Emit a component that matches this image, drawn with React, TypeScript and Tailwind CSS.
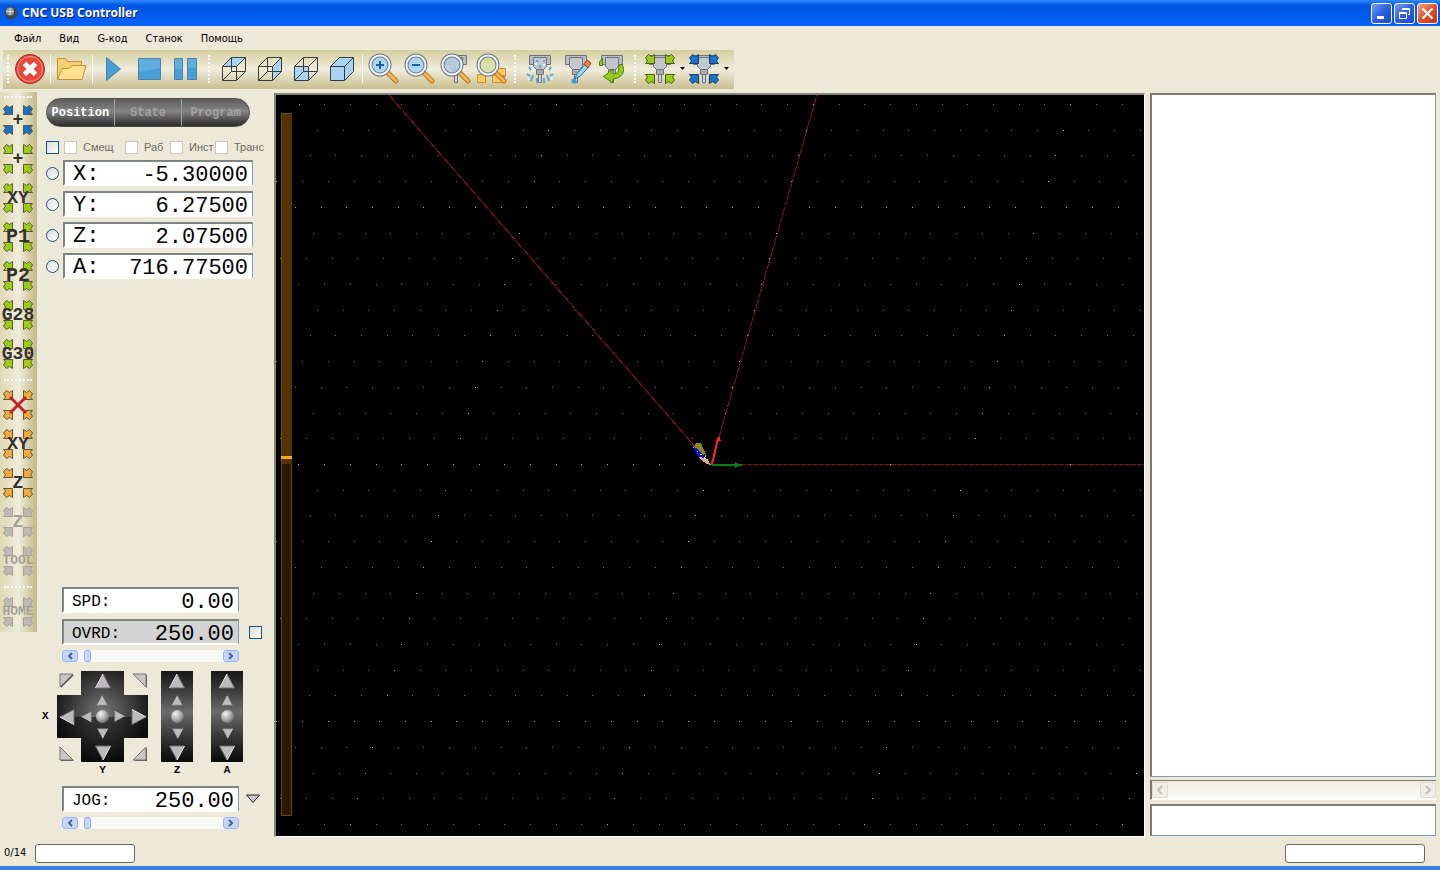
import { useState, type ReactNode } from 'react';

const GREEN = '#9ccc13';
const BLUE = '#1673c9';
const ORANGE = '#f7a83c';
const GRAY = '#bcbab2';

type CubeFace = 'top' | 'right' | 'front' | 'all';

interface SideTool {
    name: string;
    color: string;
    text?: string;
    textClass?: string;
    cross?: boolean;
    disabled?: boolean;
}

const zeroTools: SideTool[] = [
    { name: 'Go to offset', color: BLUE, text: '+', textClass: 'text-lg' },
    { name: 'Go to position', color: GREEN, text: '+', textClass: 'text-lg' },
    { name: 'Go to XY', color: GREEN, text: 'XY', textClass: 'text-lg' },
    { name: 'Go to P1', color: GREEN, text: 'P1', textClass: 'text-xl' },
    { name: 'Go to P2', color: GREEN, text: 'P2', textClass: 'text-xl' },
    { name: 'Go to G28', color: GREEN, text: 'G28', textClass: 'text-lg' },
    { name: 'Go to G30', color: GREEN, text: 'G30', textClass: 'text-lg' },
];

const measureTools: SideTool[] = [
    { name: 'Clear offset', color: ORANGE, cross: true },
    { name: 'Set XY', color: ORANGE, text: 'XY', textClass: 'text-lg' },
    { name: 'Set Z', color: ORANGE, text: 'Z', textClass: 'text-lg' },
    { name: 'Measure Z', color: GRAY, text: 'Z', textClass: 'text-lg', disabled: true },
    { name: 'Measure tool', color: GRAY, text: 'TOOL', textClass: 'text-[13px]', disabled: true },
];

const homeTools: SideTool[] = [
    { name: 'Home', color: GRAY, text: 'HOME', textClass: 'text-[13px]', disabled: true },
];

const axes = [
    { name: 'X', value: '-5.30000' },
    { name: 'Y', value: '6.27500' },
    { name: 'Z', value: '2.07500' },
    { name: 'A', value: '716.77500' },
];

function CornerArrows({ color, stroke = '#4a5a1c' }: { color: string; stroke?: string }) {
    const points = '9.5,9.5 0.5,9.5 2.5,7 0.5,4 3.5,0.5 6.5,2.5 9.5,0.5';
    return (
        <g fill={color} stroke={stroke} strokeWidth="1" strokeLinejoin="round">
            <polygon points={points} transform="translate(1 1)" />
            <polygon points={points} transform="translate(31 1) scale(-1 1)" />
            <polygon points={points} transform="translate(1 31) scale(1 -1)" />
            <polygon points={points} transform="translate(31 31) scale(-1 -1)" />
        </g>
    );
}

function Spindle() {
    return (
        <g stroke="#70747c" strokeWidth="1">
            <path d="M5.500 2.500h21v9h-4v-3h-13v3h-4z" fill="#b9bcc2" />
            <path d="M9.500 4.500h13v9l-3 3h-7l-3-3z" fill="#c3c6cc" />
            <path d="M12.500 16.500h7v5h-7z" fill="#a7abb3" />
            <path d="M14.500 21.500h3v8h-3z" fill="#cfd2d7" />
        </g>
    );
}

function Svg32({ children }: { children: ReactNode }) {
    return (
        <svg width="32" height="32" viewBox="0 0 32 32" fill="none" aria-hidden="true">
            {children}
        </svg>
    );
}

function CubeIcon({ face }: { face: CubeFace }) {
    const all = face === 'all';
    return (
        <Svg32>
            <g fill="#a9d2f7">
                {(all || face === 'top') && <path d="M4.500 13.500L13.500 4.500H27.500L18.500 13.500z" />}
                {(all || face === 'right') && <path d="M18.500 13.500L27.500 4.500V18.500L18.500 27.500z" />}
                {(all || face === 'front') && <path d="M4.500 13.500H18.500V27.500H4.500z" />}
            </g>
            <g stroke="#3c3c34">
                <path d="M4.500 13.500H18.500V27.500H4.500zM4.500 13.500L13.500 4.500H27.500V18.500L18.500 27.500M18.500 13.500L27.500 4.500" />
                {!all && <path d="M13.500 4.500V18.500H27.500M13.500 18.500L4.500 27.500" />}
            </g>
        </Svg32>
    );
}

function Magnifier({ sign, lens = '#9fd4f6' }: { sign?: string; lens?: string }) {
    return (
        <g>
            <path d="M20 20l8 8" stroke="#b87920" strokeWidth="5" strokeLinecap="round" />
            <path d="M20 20l8 8" stroke="#f9b552" strokeWidth="3" strokeLinecap="round" />
            <circle cx="12" cy="12" r="9.500" fill={lens} fillOpacity="0.85" stroke="#6f7a86" strokeWidth="4" />
            <circle cx="12" cy="12" r="9.500" stroke="#f2f5f8" strokeWidth="2" />
            {sign && <path d={sign} stroke="#155fa8" strokeWidth="2" />}
        </g>
    );
}

function ToolButton({ name, children }: { name: string; children: ReactNode }) {
    return (
        <button type="button" aria-label={name} className="flex h-9 w-9 shrink-0 items-center justify-center">
            {children}
        </button>
    );
}

function Separator() {
    return <div className="mx-0.5 h-7 w-0.5 shrink-0 border-l border-white" />;
}

function Grip({ first }: { first?: boolean }) {
    return <div className={`ml-1 h-7 shrink-0 border-l-2 border-dotted border-white ${first ? 'mr-[3px]' : 'mr-1.5'}`} />;
}

function DropArrow({ name }: { name: string }) {
    return (
        <button type="button" aria-label={name} className="flex h-9 w-2 shrink-0 items-center justify-center">
            <svg width="5" height="3" viewBox="0 0 5 3" aria-hidden="true">
                <path d="M0 0h5L2.500 3z" fill="#000" />
            </svg>
        </button>
    );
}

function TitleBar() {
    const button = 'flex h-[21px] w-[21px] items-center justify-center rounded-[3px] border border-white';
    return (
        <header className="flex h-[26px] shrink-0 items-center gap-1 bg-linear-to-b from-[#2f8bff] via-[#0054e3] via-20% to-[#0363fb] pr-0.5 pl-1">
            <svg width="14" height="14" viewBox="0 0 14 14" aria-hidden="true">
                <circle cx="7" cy="7" r="6.500" fill="#3c4a44" />
                <circle cx="6" cy="5.500" r="4" fill="#8b9a92" />
                <path d="M6 2v7M2.500 5.500h7" stroke="#dfe5e0" />
            </svg>
            <h1 className="flex-1 font-['Noto_Sans'] text-[12px] font-bold text-white [text-shadow:1px_1px_0_#0a1883]">
                CNC USB Controller
            </h1>
            <div className="flex gap-0.5">
                <button type="button" aria-label="Minimize" className={`${button} bg-linear-to-br from-[#7b9cf0] via-[#2f5fe0] to-[#1a49cf]`}>
                    <svg width="13" height="13" viewBox="0 0 13 13"><path d="M2 9h7v3H2z" fill="#fff" /></svg>
                </button>
                <button type="button" aria-label="Restore" className={`${button} bg-linear-to-br from-[#7b9cf0] via-[#2f5fe0] to-[#1a49cf]`}>
                    <svg width="13" height="13" viewBox="0 0 13 13" fill="none" stroke="#fff">
                        <path d="M1.500 5.500h7v6h-7zM1.500 6.500h7M4.500 3V1.500h7v6H10M4.500 2.500h7" />
                    </svg>
                </button>
                <button type="button" aria-label="Close" className={`${button} bg-linear-to-br from-[#f0a086] via-[#e0512c] to-[#c23312]`}>
                    <svg width="13" height="13" viewBox="0 0 13 13"><path d="M1.500 1.500l10 10M11.500 1.500l-10 10" stroke="#fff" strokeWidth="2" /></svg>
                </button>
            </div>
        </header>
    );
}

function Toolbar() {
    return (
        <div role="toolbar" className="ml-[3px] flex h-[39px] w-fit shrink-0 items-center bg-linear-to-b from-[#d6ce9f] via-[#efecdc] to-[#c9be8d] pr-1 pb-0.5">
            <Grip first />
            <ToolButton name="Emergency stop">
                <Svg32>
                    <circle cx="16" cy="16" r="14.500" fill="#e8473b" stroke="#a3231c" />
                    <circle cx="16" cy="16" r="12.500" stroke="#f59a90" />
                    <path d="M10.500 10.500l11 11M21.500 10.500l-11 11" stroke="#fff" strokeWidth="5" />
                </Svg32>
            </ToolButton>
            <Separator />
            <ToolButton name="Open">
                <Svg32>
                    <path d="M1.500 26V5.500h8l2 3h14V13" fill="#f5cf72" stroke="#c2913a" />
                    <path d="M1.500 26.500L6 15.500h7l3-3h14L26 26.500z" fill="#ffe08e" stroke="#c2913a" />
                </Svg32>
            </ToolButton>
            <Separator />
            <ToolButton name="Start">
                <Svg32><path d="M8.500 4.500L22.500 16 8.500 27.500z" fill="#479fd9" stroke="#557f9f" /></Svg32>
            </ToolButton>
            <ToolButton name="Stop">
                <Svg32>
                    <path d="M4.500 5.500h22v21h-22z" fill="#479fd9" stroke="#557f9f" />
                    <path d="M5 6h21v9L5 19z" fill="#75bbe8" fillOpacity="0.500" />
                </Svg32>
            </ToolButton>
            <ToolButton name="Pause">
                <Svg32>
                    <path d="M4.500 5.500h8v21h-8zM17.500 5.500h9v21h-9z" fill="#479fd9" stroke="#557f9f" />
                    <path d="M5 6h7v10H5zM18 6h8v9h-8z" fill="#75bbe8" fillOpacity="0.500" />
                </Svg32>
            </ToolButton>
            <Grip />
            <ToolButton name="Top view"><CubeIcon face="top" /></ToolButton>
            <ToolButton name="Side view"><CubeIcon face="right" /></ToolButton>
            <ToolButton name="Front view"><CubeIcon face="front" /></ToolButton>
            <ToolButton name="Isometric view"><CubeIcon face="all" /></ToolButton>
            <Separator />
            <ToolButton name="Zoom in"><Svg32><Magnifier sign="M12 8v8M8 12h8" /></Svg32></ToolButton>
            <ToolButton name="Zoom out"><Svg32><Magnifier sign="M8 12h8" /></Svg32></ToolButton>
            <ToolButton name="Zoom to tool"><Svg32><Spindle /><Magnifier lens="#b4cde0" /></Svg32></ToolButton>
            <ToolButton name="Zoom to fit">
                <Svg32>
                    <path d="M1.500 21.500h8v8h-8zM8.500 1.500h8v6h-8zM21.500 15.500h8v8h-8zM16.500 22.500h12v7h-12z" fill="#ffc95c" stroke="#c8923a" />
                    <Magnifier lens="#d5dfa0" />
                </Svg32>
            </ToolButton>
            <Grip />
            <ToolButton name="Coolant">
                <Svg32>
                    <Spindle />
                    <path d="M5 14l2 3M27 14l-2 3M3 21l3 2M29 21l-3 2M9 22l-2 6M23 22l2 6M13 25v5M20 25v5M12 8h2M19 8h2M16 12v3" stroke="#5ba9d6" strokeWidth="2" />
                    <path d="M8 16h2M22 16h2M4 26h2M27 26h2M11 11h2M19 12h2" stroke="#e6f4fc" strokeWidth="2" />
                </Svg32>
            </ToolButton>
            <ToolButton name="Measure">
                <Svg32>
                    <Spindle />
                    <path d="M14.500 26l3-6 8-9 3 3-8 9z" fill="#9bd6f7" stroke="#2a6da6" />
                    <path d="M24 11l3-4 4 3-3 5z" fill="#f0813a" stroke="#94461b" />
                    <circle cx="14" cy="28" r="2.500" fill="#2f9be3" />
                </Svg32>
            </ToolButton>
            <ToolButton name="Tool change">
                <Svg32>
                    <Spindle />
                    <path d="M26 11c4 8 0 14-9 15v4L7.500 23.500 17 16v5c5 0 7-4 5-8z" fill="#96cb1c" stroke="#527a10" />
                    <path d="M3.500 12.500V9l3-4v7.500z" fill="#96cb1c" stroke="#527a10" />
                </Svg32>
            </ToolButton>
            <Grip />
            <ToolButton name="Go to"><Svg32><Spindle /><CornerArrows color={GREEN} /></Svg32></ToolButton>
            <DropArrow name="Go to options" />
            <ToolButton name="Set offset"><Svg32><Spindle /><CornerArrows color={BLUE} stroke="#1b3f66" /></Svg32></ToolButton>
            <DropArrow name="Set offset options" />
        </div>
    );
}

function SideButton({ tool }: { tool: SideTool }) {
    return (
        <button type="button" aria-label={tool.name} disabled={tool.disabled} className="grid h-[39px] w-9 place-items-center">
            <span className="[grid-area:1/1]">
                <Svg32>
                    <CornerArrows color={tool.color} stroke={tool.disabled ? '#a3a198' : '#5a5a35'} />
                    {tool.cross && <path d="M8 8l16 16M24 8L8 24" stroke="#c5222b" strokeWidth="3" />}
                </Svg32>
            </span>
            {tool.text && (
                <span className={`[grid-area:1/1] font-['Liberation_Mono'] leading-none font-bold ${tool.textClass} ${tool.disabled ? 'text-[#a3a198]' : 'text-[#33332e]'}`}>
                    {tool.text}
                </span>
            )}
        </button>
    );
}

function SideGrip() {
    return <div className="mb-1 ml-1 h-2 w-7 border-b-2 border-dotted border-white" />;
}

function SideToolbar() {
    return (
        <div role="toolbar" className="flex h-[540px] w-[37px] shrink-0 flex-col items-start bg-linear-to-r from-[#e0d9b4] via-[#efecdc] to-[#c3b783]">
            <div className="mb-0.5 ml-1 h-1.5 w-7 border-b-2 border-dotted border-white" />
            {zeroTools.map((tool) => <SideButton key={tool.name} tool={tool} />)}
            <SideGrip />
            {measureTools.map((tool) => <SideButton key={tool.name} tool={tool} />)}
            <SideGrip />
            {homeTools.map((tool) => <SideButton key={tool.name} tool={tool} />)}
        </div>
    );
}

function TabBar() {
    const [active, setActive] = useState('Position');
    return (
        <div role="tablist" className="flex h-[29px] w-[204px] overflow-hidden rounded-full border border-[#4a4a4a] bg-linear-to-b from-[#5c5c5c] via-[#858585] via-45% to-[#2e2e2e]">
            {['Position', 'State', 'Program'].map((tab) => (
                <button
                    key={tab}
                    type="button"
                    role="tab"
                    aria-selected={tab === active}
                    onClick={() => setActive(tab)}
                    className={`flex-1 border-r border-[#a0a0a0] font-['Liberation_Mono'] text-xs font-bold last:border-r-0 ${tab === active ? 'text-white' : 'text-[#a2a2a2]'}`}
                >
                    {tab}
                </button>
            ))}
        </div>
    );
}

function Check({ label, enabled }: { label: string; enabled?: boolean }) {
    return (
        <input
            type="checkbox"
            aria-label={label}
            disabled={!enabled}
            className={`h-[13px] w-[13px] shrink-0 appearance-none border ${enabled ? 'border-[#1c5180] bg-linear-to-br from-[#dcdcd7] to-white' : 'border-[#cac8bb] bg-white'}`}
        />
    );
}

interface ReadoutProps {
    id: string;
    label: string;
    value: string;
    large?: boolean;
    gray?: boolean;
}

function Readout({ id, label, value, large, gray }: ReadoutProps) {
    return (
        <div className={`flex h-[26px] items-center overflow-hidden border-t-2 border-r border-b-2 border-l-2 border-t-[#7d8582] border-r-[#7f9db9] border-b-white border-l-[#7d8582] pr-1 pl-2 font-['Liberation_Mono'] text-black ${large ? 'w-[190px]' : 'w-[177px]'} ${gray ? 'bg-[#d3d3d3]' : 'bg-white'}`}>
            <label htmlFor={id} className={large ? 'pt-1 text-[22px] leading-5' : 'pt-1 text-base leading-5'}>{label}:</label>
            <input id={id} readOnly value={value} className="w-0 min-w-0 flex-1 bg-transparent pt-1 text-right text-[22px] leading-5 outline-none" />
        </div>
    );
}

function ScrollSlider({ label }: { label: string }) {
    const button = 'flex h-3 w-4 items-center justify-center rounded-[3px] border border-[#9db5ee] bg-[#c6d5fb]';
    return (
        <div className="flex h-3 w-[177px] bg-[#f8f8f4]">
            <button type="button" aria-label={`${label} down`} className={button}>
                <svg width="6" height="8" viewBox="0 0 6 8"><path d="M5 1L2 4l3 3" fill="none" stroke="#4d6185" strokeWidth="2" /></svg>
            </button>
            <input
                type="range"
                aria-label={label}
                min={0}
                max={100}
                defaultValue={4}
                className="h-3 w-0 min-w-0 flex-1 appearance-none bg-transparent [&::-webkit-slider-thumb]:h-3 [&::-webkit-slider-thumb]:w-[7px] [&::-webkit-slider-thumb]:appearance-none [&::-webkit-slider-thumb]:rounded-xs [&::-webkit-slider-thumb]:border [&::-webkit-slider-thumb]:border-[#9db5ee] [&::-webkit-slider-thumb]:bg-[#c6d5fb]"
            />
            <button type="button" aria-label={`${label} up`} className={button}>
                <svg width="6" height="8" viewBox="0 0 6 8"><path d="M1 1l3 3-3 3" fill="none" stroke="#4d6185" strokeWidth="2" /></svg>
            </button>
        </div>
    );
}

function Jog({ name, turn, place, small }: { name: string; turn: number; place?: string; small?: boolean }) {
    const size = small ? 11 : 16;
    return (
        <button type="button" aria-label={name} className={`flex items-center justify-center ${place ?? ''}`}>
            <svg width={size} height={size} viewBox="0 0 16 16">
                <path d="M8 1l7.500 14H.5z" fill="#bdbbbd" stroke="#6e6e6e" strokeWidth="1" transform={`rotate(${turn} 8 8)`} />
                <path d="M8 1L.5 15" stroke="#ececec" strokeWidth="1" transform={`rotate(${turn} 8 8)`} />
            </svg>
        </button>
    );
}

function JogCorner({ name, points, place }: { name: string; points: string; place: string }) {
    return (
        <button type="button" aria-label={name} className={`flex items-center justify-center ${place}`}>
            <svg width="18" height="18" viewBox="0 0 18 18">
                <polygon points={points} fill="#55534e" transform="translate(1 1)" />
                <polygon points={points} fill="#c9c7c4" stroke="#77756e" />
            </svg>
        </button>
    );
}

function Ball({ name, place }: { name: string; place?: string }) {
    return (
        <button type="button" aria-label={name} className={`h-[13px] w-[13px] justify-self-center rounded-full bg-radial-[at_35%_30%] from-[#f4f4f4] via-[#a4a4a4] to-[#3c3c3c] ${place ?? ''}`} />
    );
}

function JogCross() {
    return (
        <div className="grid grid-cols-[19px_20px_13px_20px_19px] grid-rows-[19px_20px_13px_20px_19px]">
            <svg width="91" height="91" viewBox="0 0 91 91" className="col-span-5 col-start-1 row-span-5 row-start-1" aria-hidden="true">
                <defs>
                    <radialGradient id="padGlow" cx="0.5" cy="0.45" r="0.55">
                        <stop offset="0" stopColor="#777" />
                        <stop offset="1" stopColor="#141414" />
                    </radialGradient>
                </defs>
                <path d="M24 0h43v24h24v43H67v24H24V67H0V24h24z" fill="url(#padGlow)" />
                <path d="M0 46h91v21H67v24H24V67H0z" fill="#000" fillOpacity="0.45" />
            </svg>
            <JogCorner name="X- Y+" points="2,2 15,2 2,15" place="col-start-1 row-start-1" />
            <JogCorner name="X+ Y+" points="3,2 16,2 16,15" place="col-start-5 row-start-1" />
            <JogCorner name="X- Y-" points="2,3 15,16 2,16" place="col-start-1 row-start-5" />
            <JogCorner name="X+ Y-" points="16,3 16,16 3,16" place="col-start-5 row-start-5" />
            <Jog name="Y+" turn={0} place="col-span-3 col-start-2 row-start-1" />
            <Jog name="Y+ step" turn={0} small place="col-start-3 row-start-2" />
            <Jog name="X-" turn={-90} place="col-start-1 row-span-3 row-start-2" />
            <Jog name="X- step" turn={-90} small place="col-start-2 row-start-3" />
            <Ball name="XY centre" place="col-start-3 row-start-3" />
            <Jog name="X+ step" turn={90} small place="col-start-4 row-start-3" />
            <Jog name="X+" turn={90} place="col-start-5 row-span-3 row-start-2" />
            <Jog name="Y- step" turn={180} small place="col-start-3 row-start-4" />
            <Jog name="Y-" turn={180} place="col-span-3 col-start-2 row-start-5" />
        </div>
    );
}

function JogStrip({ axis }: { axis: string }) {
    return (
        <div className="grid w-8 grid-rows-[19px_20px_13px_20px_19px] bg-linear-to-b from-[#161616] via-[#6b6b6b] via-45% to-[#0a0a0a]">
            <Jog name={`${axis}+`} turn={0} />
            <Jog name={`${axis}+ step`} turn={0} small />
            <Ball name={`${axis} centre`} />
            <Jog name={`${axis}- step`} turn={180} small />
            <Jog name={`${axis}-`} turn={180} />
        </div>
    );
}

function ControlPanel() {
    const axisLabel = "text-center font-['Liberation_Mono'] text-[11px] leading-4 font-bold";
    return (
        <section className="flex w-[237px] shrink-0 flex-col pt-1.5 pb-2 pl-[9px]">
            <TabBar />

            <div className="mt-3.5 flex h-[13px] items-center font-['Liberation_Sans'] text-[11px] text-[#6d6b62]">
                <Check label="All" enabled />
                <label className="ml-[5px] flex w-[61px] items-center gap-1.5"><Check label="Смещ" />Смещ</label>
                <label className="flex w-[45px] items-center gap-1.5"><Check label="Раб" />Раб</label>
                <label className="flex w-[45px] items-center gap-1.5"><Check label="Инст" />Инст</label>
                <label className="flex items-center gap-1.5"><Check label="Транс" />Транс</label>
            </div>

            <div className="mt-1.5 flex flex-col gap-[5px]">
                {axes.map((axis) => (
                    <div key={axis.name} className="flex items-center gap-1">
                        <input type="radio" name="axis" aria-label={`Select ${axis.name}`} className="h-[13px] w-[13px] appearance-none rounded-full border border-[#1c5180] bg-linear-to-br from-[#dcdcd7] to-white" />
                        <Readout id={`axis-${axis.name}`} label={axis.name} value={axis.value} large />
                    </div>
                ))}
            </div>

            {/* Feed and jog controls */}
            <div className="mt-auto flex flex-col pl-4">
                <Readout id="spd" label="SPD" value="0.00" />
                <div className="mt-1.5 flex items-center gap-2.5">
                    <Readout id="ovrd" label="OVRD" value="250.00" gray />
                    <Check label="Override" enabled />
                </div>
                <div className="mt-[5px]"><ScrollSlider label="Override" /></div>

                <div className="mt-[9px] -ml-5 grid grid-cols-[15px_91px_32px_32px] grid-rows-[91px_16px]">
                    <span className="self-center font-['Liberation_Mono'] text-[11px] font-bold">X</span>
                    <JogCross />
                    <div className="ml-[13px]"><JogStrip axis="Z" /></div>
                    <div className="ml-[31px]"><JogStrip axis="A" /></div>
                    <span />
                    <span className={axisLabel}>Y</span>
                    <span className={`${axisLabel} ml-[13px] w-8`}>Z</span>
                    <span className={`${axisLabel} ml-[31px] w-8`}>A</span>
                </div>

                <div className="mt-2 flex items-center gap-1.5">
                    <Readout id="jog" label="JOG" value="250.00" />
                    <button type="button" aria-label="Jog presets">
                        <svg width="16" height="10" viewBox="0 0 16 10"><path d="M1.500 1h13L8 8.500z" fill="#c9c9c9" stroke="#222" /></svg>
                    </button>
                </div>
                <div className="mt-[5px]"><ScrollSlider label="Jog" /></div>
            </div>
        </section>
    );
}

const PITCH = 25.72;
const SHIFT = 7.35;

function gridDots() {
    const dots: { x: number; y: number; major: boolean }[] = [];
    for (let row = -14; row <= 14; row++) {
        for (let col = -22; col <= 22; col++) {
            const x = Math.round(col * PITCH - row * SHIFT) - 1;
            const y = Math.round(row * PITCH) - 1;
            if (x < -435 || x > 432) continue;
            dots.push({ x, y, major: row % 10 === 0 || col % 10 === 0 });
        }
    }
    return dots;
}

function Viewport() {
    return (
        <main className="min-w-0 flex-1 border-t-2 border-r border-b border-l-2 border-t-[#85837a] border-r-white border-b-white border-l-[#85837a] bg-black">
            <svg className="h-full w-full" viewBox="-435 -370 868 741" preserveAspectRatio="xMidYMid slice" shapeRendering="crispEdges" role="img" aria-label="Tool path">
                {gridDots().map((dot) => (
                    <rect key={`${dot.x},${dot.y}`} x={dot.x} y={dot.y} width="1" height="1" fill={dot.major ? '#b4b4b4' : '#6e726e'} />
                ))}

                {/* Machine axes */}
                <g stroke="#8e0e0e" fill="none">
                    <path d="M0 0L-322 -370" />
                    <path d="M0 0L106 -370" strokeDasharray="5 1" />
                    <path d="M0 -0.500H435" strokeDasharray="5 1" />
                </g>
                <path d="M1 -1L7 -26" stroke="#ff1e1e" strokeWidth="2" />
                <path d="M5 -24l3 -6l2 6z" fill="#ff1e1e" />
                <path d="M1 0H31" stroke="#0a7d12" strokeWidth="2" />
                <path d="M24 -3l6 3l-6 3z" fill="#0a7d12" />

                {/* Machined part */}
                <path d="M-17 -18l2 -4h5l2 5l3 6l-4 1l-5 -6z" fill="#8a8a1c" />
                <path d="M-18 -19l5 3l5 6l2 3l-4 1l-5 -6z" fill="#1010e0" />
                <path d="M-12 -8l6 1l4 4l2 3l-4 -1l-6 -4z" fill="#d9a878" />
                <path d="M-18 -18l17 16M-6 -10l4 8" stroke="#e8d8c8" strokeWidth="1" fill="none" strokeDasharray="2 3" />

                {/* Z level */}
                <rect x="-429.500" y="-351.500" width="10" height="702" fill="#2b1a00" stroke="#6b4a0c" />
                <rect x="-429" y="-351" width="10" height="350" fill="#553300" />
                <rect x="-430" y="-9" width="11" height="3" fill="#ffa510" />
            </svg>
        </main>
    );
}

function ProgramPanel() {
    const sunken = 'border-t-2 border-r border-b border-l-2 border-t-[#7d7b70] border-r-[#7f9db9] border-b-[#7f9db9] border-l-[#7d7b70]';
    const scroll = 'flex h-4 w-4 items-center justify-center rounded-xs border border-[#dddbd0] bg-[#efeee6]';
    return (
        <aside className="mr-1 ml-[5px] flex w-[286px] shrink-0 flex-col pb-px">
            <div role="listbox" aria-label="G-code" className={`flex-1 bg-white ${sunken}`} />
            <div className="mt-[3px] flex h-5 items-center justify-between border-t border-b border-l-2 border-t-[#7d7b70] border-b-white border-l-[#7d7b70] bg-linear-to-b from-[#efede2] to-[#fbfbf8]">
                <button type="button" aria-label="Scroll left" disabled className={scroll}>
                    <svg width="8" height="10" viewBox="0 0 8 10"><path d="M6 1L2 5l4 4" fill="none" stroke="#c5c3b8" strokeWidth="2" /></svg>
                </button>
                <button type="button" aria-label="Scroll right" disabled className={scroll}>
                    <svg width="8" height="10" viewBox="0 0 8 10"><path d="M2 1l4 4-4 4" fill="none" stroke="#c5c3b8" strokeWidth="2" /></svg>
                </button>
            </div>
            <input aria-label="Command" className={`mt-1 h-8 w-full bg-white px-1 text-xs outline-none ${sunken}`} />
        </aside>
    );
}

export default function App() {
    return (
        <div className="flex h-screen flex-col overflow-hidden bg-[#ece9d8] text-black">
            <TitleBar />
            <nav className="flex h-6 shrink-0 items-center gap-[18px] pt-0.5 pl-3.5 font-['DejaVu_Sans_Condensed'] text-[11px]">
                {['Файл', 'Вид', 'G-код', 'Станок', 'Помощь'].map((item) => (
                    <button key={item} type="button">{item}</button>
                ))}
            </nav>
            <Toolbar />

            <div className="flex min-h-0 flex-1 pt-[3px]">
                <SideToolbar />
                <ControlPanel />
                <div className="flex min-w-0 flex-1 pt-px">
                    <Viewport />
                    <ProgramPanel />
                </div>
            </div>

            <footer className="flex h-[33px] shrink-0 items-center border-b-4 border-[#3a80dc] pt-1 pr-[15px] pl-1 font-['DejaVu_Sans_Condensed'] text-[11px]">
                <span className="w-[31px]">0/14</span>
                <div role="progressbar" aria-label="Program progress" className="h-[19px] w-[100px] rounded-[3px] border border-[#686868] bg-white" />
                <div role="progressbar" aria-label="Buffer" className="ml-auto h-[19px] w-[140px] rounded-[3px] border border-[#686868] bg-white" />
            </footer>
        </div>
    );
}
